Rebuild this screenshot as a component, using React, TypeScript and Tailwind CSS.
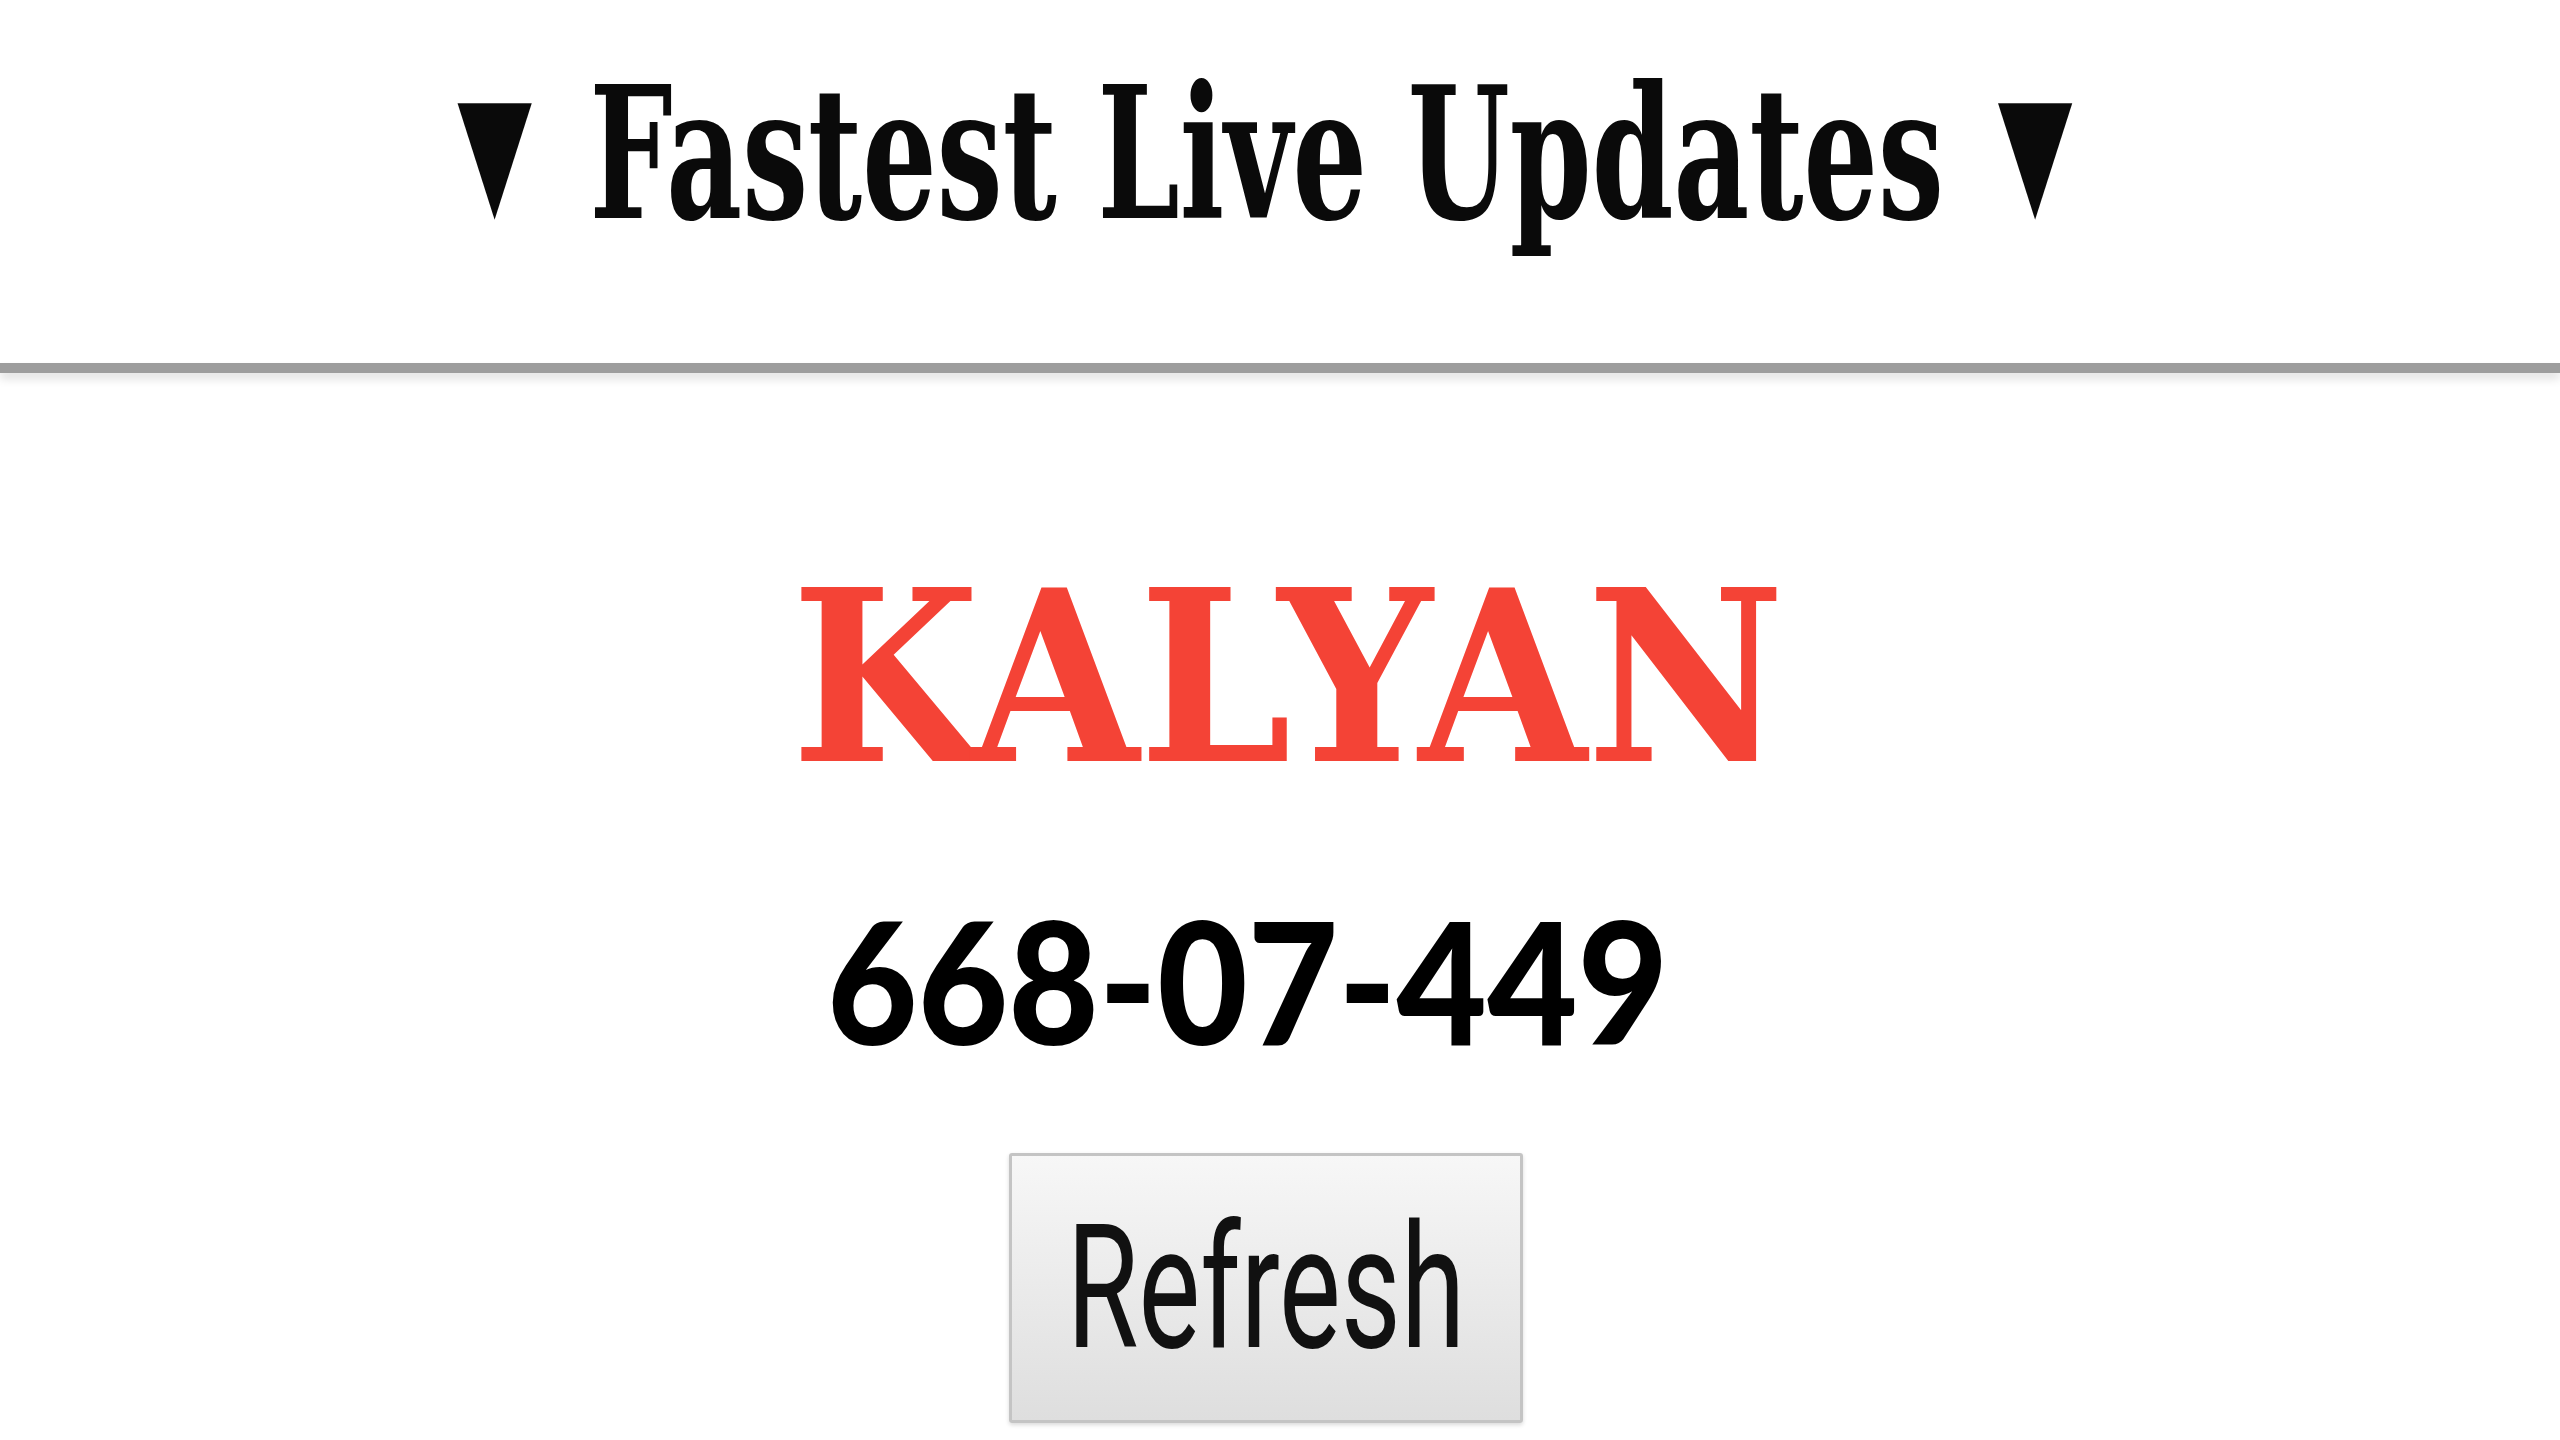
export default function App() {
  return (
    <div className="min-h-screen w-full bg-white">
      {/* header */}
      <div className="flex justify-center pt-[62px] pb-[118px] pr-[30px]">
        <h1
          className="scale-x-[0.64] whitespace-nowrap text-[183px] leading-none font-bold text-[#0a0a0a]"
          style={{ fontFamily: '"DejaVu Serif", serif' }}
        >
          <span className="mr-[26px] align-[17px] text-[152px] leading-none">▼</span> Fastest Live Updates{' '}
          <span className="ml-[20px] align-[17px] text-[152px] leading-none">▼</span>
        </h1>
      </div>
      <div className="h-[10px] w-full bg-[#9d9d9d] shadow-[0_6px_10px_rgba(0,0,0,0.12)]" />

      <div className="flex flex-col items-center pr-[28px]">
        <div
          className="mt-[186px] scale-x-[0.915] whitespace-nowrap pl-[48px] text-[237px] leading-none font-bold text-[#f44336]"
          style={{ fontFamily: '"DejaVu Serif", serif' }}
        >
          KALYAN
        </div>

        <div
          className="mt-[99px] scale-x-[0.924] whitespace-nowrap pr-[40px] text-[169px] leading-none font-black text-black"
          style={{ fontFamily: 'Lato, sans-serif' }}
        >
          668-07-449
        </div>

        <button
          type="button"
          className="mt-[89px] flex h-[270px] w-[514px] items-center justify-center rounded-[3px] border-[3px] border-[#c4c4c4] bg-gradient-to-b from-[#f7f7f7] to-[#dedede] shadow-[0_2px_4px_rgba(0,0,0,0.15)]"
        >
          <span
            className="scale-x-[0.673] whitespace-nowrap text-[173px] leading-none text-[#111]"
            style={{ fontFamily: 'Roboto, sans-serif' }}
          >
            Refresh
          </span>
        </button>
      </div>
    </div>
  );
}
